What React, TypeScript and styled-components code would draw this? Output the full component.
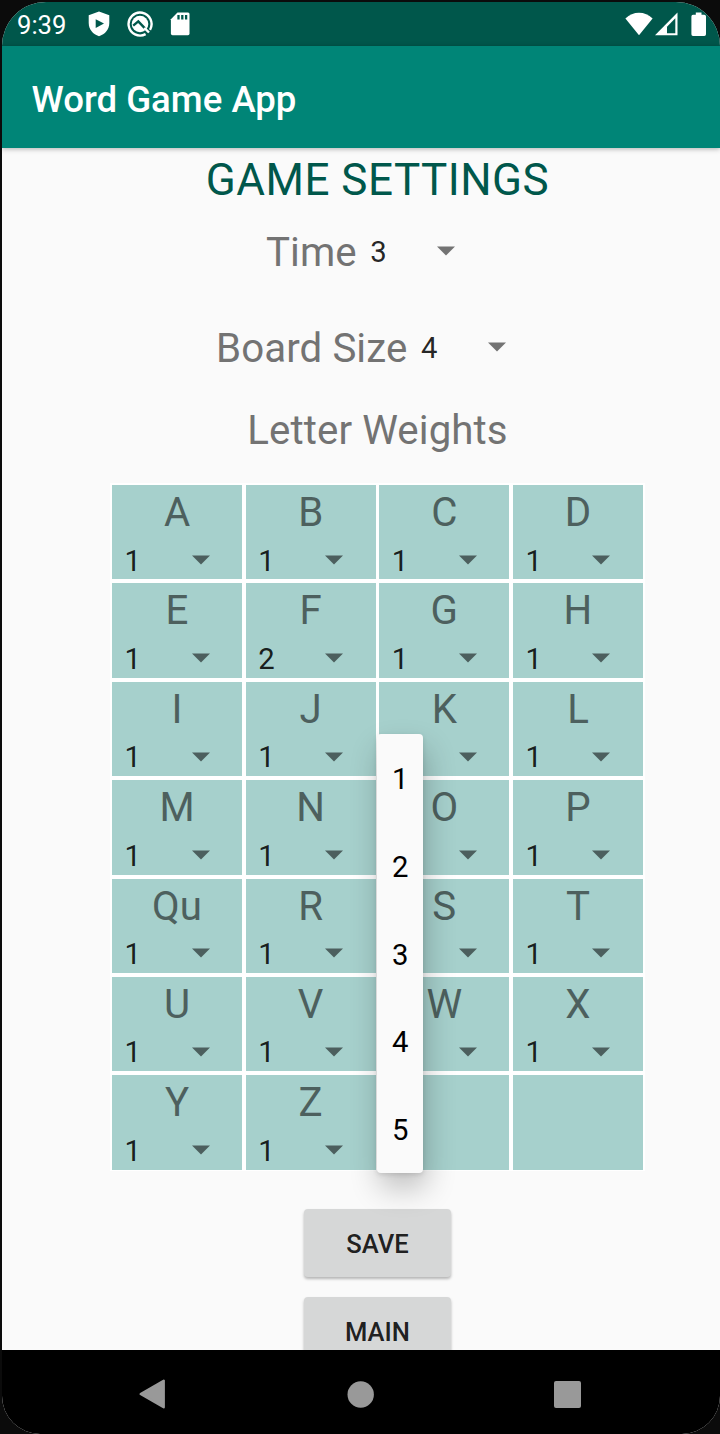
import React from "react";
import styled, { createGlobalStyle } from "styled-components";

const GlobalStyle = createGlobalStyle`
  * { box-sizing: border-box; }
  body {
    margin: 0;
    background: #0b0b0b;
    font-family: Roboto, "Liberation Sans", sans-serif;
  }
`;

const Screen = styled.div`
  display: flex;
  flex-direction: column;
  width: 718px;
  height: 1432px;
  margin: 2px 0 0 2px;
  border-radius: 44px 44px 38px 38px;
  overflow: hidden;
  background: #fafafa;
`;

const StatusBar = styled.header`
  display: flex;
  align-items: center;
  flex: none;
  height: 44px;
  padding: 0 13px 0 15px;
  background: #00574b;
  color: #fff;
`;

const Clock = styled.span`
  width: 71px;
  font-size: 25.6px;
  line-height: 44px;
  padding-top: 2px;
`;

const Notifications = styled.div`
  display: flex;
  align-items: center;
  gap: 17px;
`;

const Signals = styled.div`
  display: flex;
  align-items: center;
  gap: 2px;
  margin-left: auto;

  svg:last-child {
    margin-left: 10px;
  }
`;

const AppBar = styled.div`
  flex: none;
  height: 102px;
  padding-left: 29.5px;
  background: #008577;
  color: #fff;
  font-size: 36.6px;
  font-weight: 500;
  line-height: 107px;
  box-shadow: 0 1px 5px rgba(0, 0, 0, 0.3);
  z-index: 1;
`;

const Content = styled.main`
  flex: none;
  display: flex;
  flex-direction: column;
  align-items: center;
  height: 1202px;
  padding-left: 33px;
  overflow: hidden;
`;

const Title = styled.h1`
  margin: 0;
  flex: none;
  height: 64px;
  font-size: 44px;
  font-weight: 400;
  line-height: 65px;
  letter-spacing: 0.5px;
  color: #00574b;
`;

const Label = styled.span`
  font-size: 40.23px;
  letter-spacing: 0.1px;
  color: #737373;
`;

const SettingRow = styled.div<{ $height: number; $indent: number }>`
  flex: none;
  display: flex;
  align-items: center;
  align-self: flex-start;
  height: ${(p) => p.$height}px;
  margin-left: ${(p) => p.$indent}px;
  gap: 13.5px;
`;

const Heading = styled.h2`
  flex: none;
  margin: 0 0 25px;
  font-size: 40.23px;
  font-weight: 400;
  line-height: 54px;
  letter-spacing: 0.1px;
  color: #737373;
`;

const SpinnerBox = styled.div`
  display: flex;
  align-items: center;
  font-size: 29.26px;
  color: rgba(0, 0, 0, 0.87);

  svg {
    position: relative;
    top: -0.7px;
  }
`;

const SpinnerValue = styled.span`
  width: 67px;
`;

const Table = styled.div`
  flex: none;
  position: relative;
  display: grid;
  grid-template-columns: repeat(4, 130px);
  grid-auto-rows: 94.4px;
  gap: 4px 3.67px;
  width: 535px;
  padding: 2px 2px 1.3px;
  background: #fff;
`;

const Cell = styled.div`
  background: #a6d0cc;
  overflow: hidden;
`;

const Letter = styled.div`
  height: 55px;
  font-size: 40.23px;
  line-height: 56px;
  text-align: center;
  color: #4d605e;
`;

const CellSpinner = styled.div`
  display: flex;
  height: 41px;
  padding-left: 12.5px;
`;

const Popup = styled.ul`
  position: absolute;
  left: 267px;
  top: 251px;
  width: 46px;
  margin: 0;
  padding: 0;
  list-style: none;
  border-radius: 4px;
  background: #fafafa;
  box-shadow: 3px 15px 30px rgba(0, 0, 0, 0.24), 0 2px 5px rgba(0, 0, 0, 0.12);
`;

const Option = styled.li`
  height: 87.8px;
  padding-left: 0.6px;
  font-size: 29.26px;
  line-height: 91px;
  text-align: center;
  color: #000;
`;

const Actions = styled.div`
  flex: none;
  display: flex;
  flex-direction: column;
  gap: 20px;
  margin-top: 38px;
`;

const Button = styled.button`
  width: 147px;
  height: 68px;
  padding: 1px 0 0;
  border: 0;
  border-radius: 4px;
  background: #d6d7d7;
  color: rgba(0, 0, 0, 0.87);
  font-family: inherit;
  font-size: 25.6px;
  font-weight: 500;
  box-shadow: 0 2px 3px rgba(0, 0, 0, 0.28);
`;

const NavBar = styled.nav`
  flex: none;
  display: flex;
  align-items: center;
  height: 84px;
  padding: 4px 0 0 136.5px;
  gap: 180.3px;
  background: #000;
`;

const Caret = () => (
  <svg width="18" height="10" viewBox="0 0 18 10">
    <path d="M0 0.4H18L9 9.4Z" fill="#000" fillOpacity="0.54" />
  </svg>
);

const Spinner = ({ value }: { value: number | null }) => (
  <SpinnerBox>
    <SpinnerValue>{value}</SpinnerValue>
    <Caret />
  </SpinnerBox>
);

const ShieldIcon = () => (
  <svg width="22" height="26" viewBox="0 0 22 26">
    <path
      d="M11 .5 21.3 4.2V12C21.3 18.3 17 23.4 11 25.2 5 23.4.7 18.3.7 12V4.2Z"
      fill="#fff"
    />
    <path d="M7.7 8.2V17L16 12.6Z" fill="#00574b" />
  </svg>
);

const SyncIcon = () => (
  <svg width="26" height="26" viewBox="0 0 26 26" fill="none">
    <path d="M18.6 23.1A11.5 11.5 0 1 1 23 18.8" stroke="#fff" strokeWidth="2.4" />
    <circle cx="13" cy="13" r="8.3" fill="#fff" />
    <path d="M6.2 14.6 11.3 10.4 18.2 17.6" stroke="#00574b" strokeWidth="2.4" />
    <path d="M17.3 16.8 22 21.5" stroke="#fff" strokeWidth="2.4" />
  </svg>
);

const SdCardIcon = () => (
  <svg width="20" height="24" viewBox="0 0 20 24">
    <path d="M7.5 .6H18Q19.5 .6 19.5 2.1V21.5Q19.5 23.3 18 23.3H2.5Q.9 23.3.9 21.5V7.2Z" fill="#fff" />
    <path d="M8.5 3V7.5M12.3 3V7.5M16.1 3V7.5" stroke="#00574b" strokeWidth="2.3" />
  </svg>
);

const WifiIcon = () => (
  <svg width="28" height="24" viewBox="0 0 28 24">
    <path d="M.4 6.4C8-1.2 20-1.2 27.6 6.4L14 23.3Z" fill="#fff" />
  </svg>
);

const CellularIcon = () => (
  <svg width="24" height="24" viewBox="0 0 24 24">
    <path d="M0 23.3 22.5.6V23.3Z" fill="#fff" />
    <path d="M12 14.7 20.3 6.3V21.2H12Z" fill="#00574b" />
  </svg>
);

const BatteryIcon = () => (
  <svg width="16" height="25" viewBox="0 0 16 25">
    <path
      d="M4.8.5H10.5V2.8H13.3Q15 2.8 15 4.5V22.3Q15 24 13.3 24H2Q.4 24 .4 22.3V4.5Q.4 2.8 2 2.8H4.8Z"
      fill="#fff"
    />
  </svg>
);

const BackIcon = () => (
  <svg width="28" height="30" viewBox="0 0 28 30">
    <path
      d="M1.7 15 24.7 1.7V28.3Z"
      fill="#999"
      stroke="#999"
      strokeWidth="2.4"
      strokeLinejoin="round"
    />
  </svg>
);

const HomeIcon = () => (
  <svg width="27" height="27" viewBox="0 0 27 27">
    <circle cx="13.7" cy="13.5" r="13.2" fill="#999" />
  </svg>
);

const RecentsIcon = () => (
  <svg width="27" height="27" viewBox="0 0 27 27">
    <rect width="27" height="27" rx="2" fill="#999" />
  </svg>
);

const letters = [
  "A", "B", "C", "D", "E", "F", "G", "H", "I", "J", "K", "L", "M",
  "N", "O", "P", "Qu", "R", "S", "T", "U", "V", "W", "X", "Y", "Z",
];

// Cells whose value sits behind the open menu hold no number.
const weights: Record<string, number | null> = { F: 2, K: null, O: null, S: null, W: null };

const weightOf = (letter: string) => (letter in weights ? weights[letter] : 1);

export default function App() {
  return (
    <>
      <GlobalStyle />
      <Screen>
        <StatusBar>
          <Clock>9:39</Clock>
          <Notifications>
            <ShieldIcon />
            <SyncIcon />
            <SdCardIcon />
          </Notifications>
          <Signals>
            <WifiIcon />
            <CellularIcon />
            <BatteryIcon />
          </Signals>
        </StatusBar>
        <AppBar>Word Game App</AppBar>
        <Content>
          <Title>GAME SETTINGS</Title>
          <SettingRow $height={80} $indent={231}>
            <Label>Time</Label>
            <Spinner value={3} />
          </SettingRow>
          <SettingRow $height={112} $indent={181}>
            <Label>Board Size</Label>
            <Spinner value={4} />
          </SettingRow>
          <Heading>Letter Weights</Heading>
          <Table>
            {letters.map((letter) => (
              <Cell key={letter}>
                <Letter>{letter}</Letter>
                <CellSpinner>
                  <Spinner value={weightOf(letter)} />
                </CellSpinner>
              </Cell>
            ))}
            <Cell />
            <Cell />
            <Popup>
              {[1, 2, 3, 4, 5].map((n) => (
                <Option key={n}>{n}</Option>
              ))}
            </Popup>
          </Table>
          <Actions>
            <Button>SAVE</Button>
            <Button>MAIN</Button>
          </Actions>
        </Content>
        <NavBar>
          <BackIcon />
          <HomeIcon />
          <RecentsIcon />
        </NavBar>
      </Screen>
    </>
  );
}
